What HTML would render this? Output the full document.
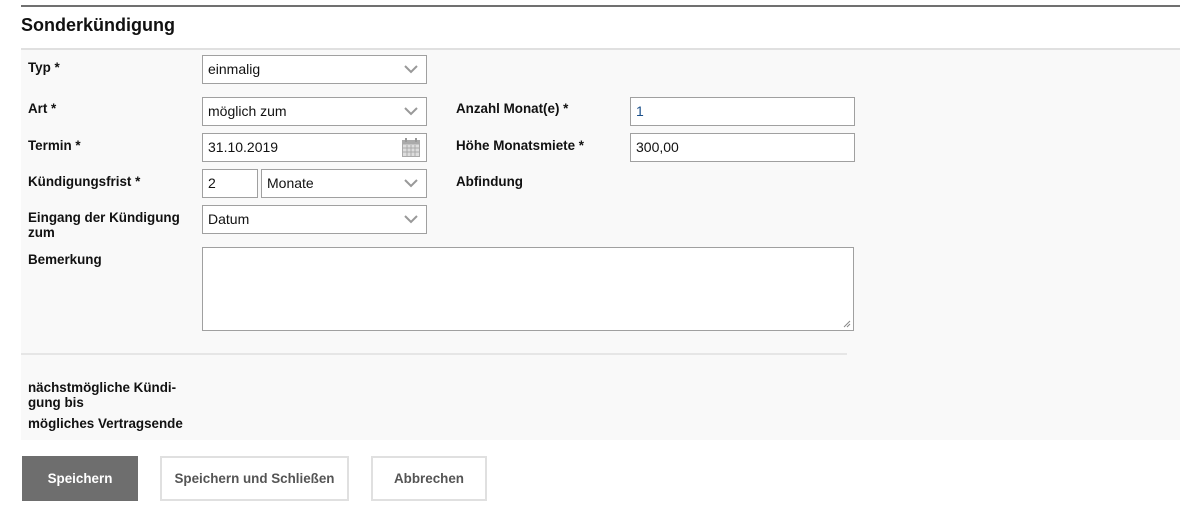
<!DOCTYPE html>
<html><head><meta charset="utf-8"><style>
*{box-sizing:border-box;margin:0;padding:0}
body{width:1193px;height:512px;background:#fff;font-family:"Liberation Sans",Arial,sans-serif;position:relative;overflow:hidden;color:#111}
.a{position:absolute}
.l{position:absolute;font-size:13.4px;font-weight:bold;line-height:15px;color:#111}
.f{position:absolute;border:1px solid #a0a0a0;background:#fff;font-size:14px;padding-left:5px;height:29px;line-height:27px;color:#111}
.f svg{position:absolute;right:8px;top:9px}
.b{position:absolute;top:456px;height:45px;font-size:13.4px;font-weight:bold;line-height:41px;text-align:center;border:2px solid #e0e0e0;background:#fff;color:#555}
</style></head><body>
<div class="a" style="left:21px;top:5px;width:1159px;height:2px;background:#707070"></div>
<div class="a" style="left:21px;top:15px;font-size:18px;font-weight:bold;color:#111">Sonderkündigung</div>
<div class="a" style="left:21px;top:48px;width:1159px;height:392px;background:#f9f9f9;border-top:2px solid #e0e0e0"></div>

<div class="l" style="left:28px;top:60px">Typ *</div>
<div class="f" style="left:202px;top:55px;width:225px">einmalig<svg width="14" height="9"><path d="M1 1l6 6 6-6" fill="none" stroke="#999" stroke-width="2"/></svg></div>

<div class="l" style="left:28px;top:101px">Art *</div>
<div class="f" style="left:202px;top:97px;width:225px">möglich zum<svg width="14" height="9"><path d="M1 1l6 6 6-6" fill="none" stroke="#999" stroke-width="2"/></svg></div>

<div class="l" style="left:28px;top:138px">Termin *</div>
<div class="f" style="left:202px;top:133px;width:225px">31.10.2019<svg width="18" height="19" style="right:6px;top:4px"><rect x="0.5" y="2.5" width="17" height="16" fill="#ddd" stroke="#aaa"/><rect x="0.5" y="2.5" width="17" height="4" fill="#aaa"/><path d="M4 0v4M14 0v4" stroke="#999" stroke-width="2"/><path d="M1 10h16M1 14h16M5 7v11M9 7v11M13 7v11" stroke="#aaa" stroke-width="1"/></svg></div>

<div class="l" style="left:28px;top:174px">Kündigungsfrist *</div>
<div class="f" style="left:202px;top:169px;width:56px">2</div>
<div class="f" style="left:261px;top:169px;width:166px">Monate<svg width="14" height="9"><path d="M1 1l6 6 6-6" fill="none" stroke="#999" stroke-width="2"/></svg></div>

<div class="l" style="left:28px;top:210px">Eingang der Kündigung<br>zum</div>
<div class="f" style="left:202px;top:205px;width:225px">Datum<svg width="14" height="9"><path d="M1 1l6 6 6-6" fill="none" stroke="#999" stroke-width="2"/></svg></div>

<div class="l" style="left:456px;top:101px">Anzahl Monat(e) *</div>
<div class="f" style="left:630px;top:97px;width:225px;color:#1a4f8a">1</div>
<div class="l" style="left:456px;top:138px">Höhe Monatsmiete *</div>
<div class="f" style="left:630px;top:133px;width:225px">300,00</div>
<div class="l" style="left:456px;top:174px">Abfindung</div>

<div class="l" style="left:28px;top:252px">Bemerkung</div>
<div class="f" style="left:202px;top:247px;width:652px;height:84px"><svg width="8" height="8" style="right:2px;top:auto;bottom:2px"><path d="M7 1L1 7M7 4L4 7" stroke="#888"/></svg></div>

<div class="a" style="left:21px;top:353px;width:826px;height:2px;background:#e6e6e6"></div>
<div class="l" style="left:28px;top:380px">nächstmögliche Kündi-<br>gung bis</div>
<div class="l" style="left:28px;top:416px">mögliches Vertragsende</div>

<div class="b" style="left:22px;width:116px;background:#6e6e6e;border-color:#6e6e6e;color:#fff">Speichern</div>
<div class="b" style="left:160px;width:189px">Speichern und Schließen</div>
<div class="b" style="left:371px;width:116px">Abbrechen</div>
</body></html>
